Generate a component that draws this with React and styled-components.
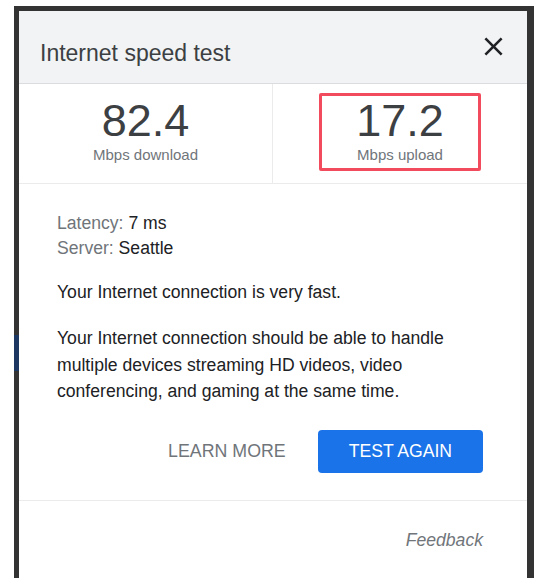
import React from "react";
import styled, { createGlobalStyle } from "styled-components";

const Global = createGlobalStyle`
  html, body { margin: 0; padding: 0; background: #ffffff; }
  body { font-family: "Liberation Sans", Arial, sans-serif; }
  * { box-sizing: border-box; }
`;

const Frame = styled.div`
  margin: 6px 0 0 14px;
  width: 520px;
  height: 572px;
  padding: 5px 7px 0 5px;
  background:
    linear-gradient(#1d3763, #1d3763) 0 329px / 5px 36px no-repeat,
    #333333;
  display: flex;
`;

const Panel = styled.div`
  flex: 1;
  background: #ffffff;
  display: flex;
  flex-direction: column;
  overflow: hidden;
`;

const Header = styled.div`
  height: 73px;
  background: #f1f3f4;
  border-bottom: 1px solid #dadce0;
  display: flex;
  align-items: center;
  justify-content: space-between;
  padding: 0 18px 0 21px;
`;

const Title = styled.h1`
  margin: 0;
  padding-top: 11px;
  font-size: 23px;
  line-height: 26px;
  font-weight: 400;
  color: #3c4043;
`;

const CloseButton = styled.button`
  border: 0;
  background: none;
  padding: 0;
  width: 31px;
  height: 31px;
  margin-top: -1px;
  display: flex;
  align-items: center;
  justify-content: center;
  color: #202124;
  cursor: pointer;
`;

const Stats = styled.div`
  display: grid;
  grid-template-columns: 1fr 1fr;
  height: 100px;
  border-bottom: 1px solid #ebebeb;
`;

const StatCell = styled.div`
  display: flex;
  justify-content: center;
  padding-top: 9px;
  border-right: ${(p) => (p.$divider ? "1px solid #ebebeb" : "0")};
`;

const StatBox = styled.div`
  width: 162px;
  height: 78px;
  padding-top: 0;
  border: 3px solid ${(p) => (p.$highlight ? "#f24b5d" : "transparent")};
  border-radius: 2px;
  display: flex;
  flex-direction: column;
  align-items: center;
`;

const StatValue = styled.div`
  font-size: 45px;
  line-height: 50px;
  color: #3c4043;
`;

const StatLabel = styled.div`
  font-size: 15px;
  line-height: 17px;
  color: #70757a;
`;

const Body = styled.div`
  padding: 27px 44px 27px 38px;
  border-bottom: 1px solid #ebebeb;
  font-size: 17.6px;
  color: #202124;
`;

const InfoLine = styled.div`
  line-height: 25px;
`;

const InfoKey = styled.span`
  color: #70757a;
`;

const Para = styled.p`
  margin: ${(p) => p.$top}px 0 0 0;
  line-height: 26.4px;
`;

const Actions = styled.div`
  display: flex;
  justify-content: flex-end;
  align-items: center;
  margin-top: 25px;
  gap: 8px;
`;

const TextButton = styled.button`
  border: 0;
  background: none;
  font-family: inherit;
  font-size: 17.8px;
  color: #70757a;
  height: 43px;
  padding: 0 24px;
  cursor: pointer;
`;

const PrimaryButton = styled.button`
  border: 0;
  border-radius: 4px;
  background: #1a73e8;
  color: #ffffff;
  font-family: inherit;
  font-size: 17.6px;
  height: 43px;
  padding: 0 31px;
  cursor: pointer;
`;

const Footer = styled.div`
  display: flex;
  justify-content: flex-end;
  padding: 26px 44px 0 0;
`;

const FeedbackLink = styled.a`
  font-size: 17.6px;
  line-height: 26.4px;
  font-style: italic;
  color: #70757a;
  text-decoration: none;
`;

const CloseIcon = () => (
  <svg width="31" height="31" viewBox="0 0 24 24" fill="currentColor">
    <path d="M19 6.41L17.59 5 12 10.59 6.41 5 5 6.41 10.59 12 5 17.59 6.41 19 12 13.41 17.59 19 19 17.59 13.41 12z" />
  </svg>
);

export default function App() {
  return (
    <>
      <Global />
      <Frame>
        <Panel>
          <Header>
            <Title>Internet speed test</Title>
            <CloseButton aria-label="Close">
              <CloseIcon />
            </CloseButton>
          </Header>
          <Stats>
            <StatCell $divider>
              <StatBox>
                <StatValue>82.4</StatValue>
                <StatLabel>Mbps download</StatLabel>
              </StatBox>
            </StatCell>
            <StatCell>
              <StatBox $highlight>
                <StatValue>17.2</StatValue>
                <StatLabel>Mbps upload</StatLabel>
              </StatBox>
            </StatCell>
          </Stats>
          <Body>
            <InfoLine>
              <InfoKey>Latency:</InfoKey> 7 ms
            </InfoLine>
            <InfoLine>
              <InfoKey>Server:</InfoKey> Seattle
            </InfoLine>
            <Para $top={18}>Your Internet connection is very fast.</Para>
            <Para $top={20}>
              Your Internet connection should be able to handle multiple
              devices streaming HD videos, video conferencing, and gaming at the
              same time.
            </Para>
            <Actions>
              <TextButton>LEARN MORE</TextButton>
              <PrimaryButton>TEST AGAIN</PrimaryButton>
            </Actions>
          </Body>
          <Footer>
            <FeedbackLink href="#">Feedback</FeedbackLink>
          </Footer>
        </Panel>
      </Frame>
    </>
  );
}
